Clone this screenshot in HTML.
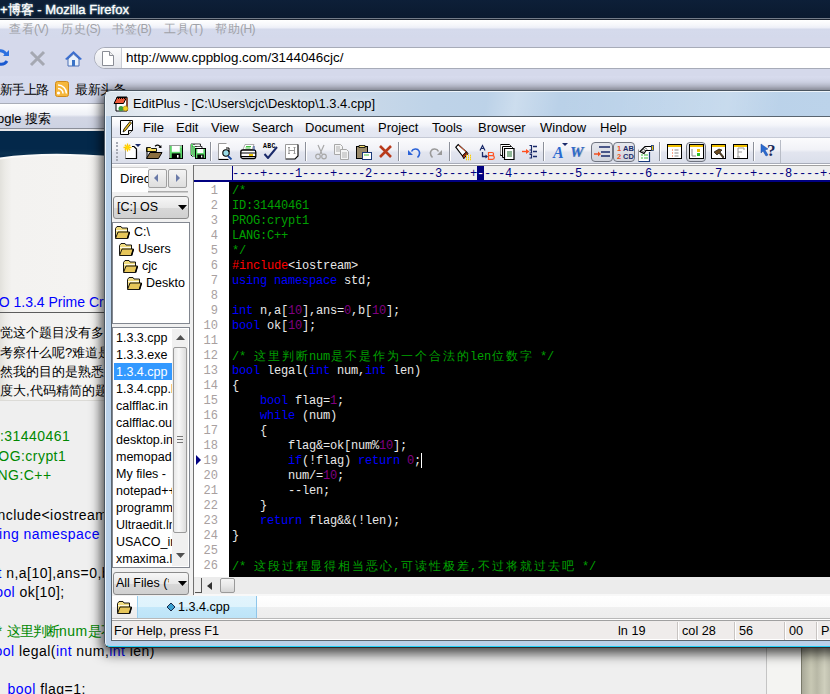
<!DOCTYPE html><html><head><meta charset="utf-8"><style>
*{margin:0;padding:0;box-sizing:border-box}
html,body{width:830px;height:694px;overflow:hidden;background:#efefef;font-family:"Liberation Sans",sans-serif;}
.a{position:absolute}
.t{position:absolute;white-space:pre;line-height:1}
.cj{display:inline-block;text-align:center}
.nocjk .cj,.nocjk .m b{color:transparent !important;background-image:linear-gradient(var(--c),var(--c)),linear-gradient(var(--c),var(--c)),linear-gradient(var(--c),var(--c)),linear-gradient(var(--c),var(--c)),linear-gradient(var(--c),var(--c)),linear-gradient(var(--c),var(--c));background-repeat:no-repeat;background-size:11px 1px,11px 1px,11px 1px,1px 11px,1px 11px,1px 11px;background-position:1px 1px,1px 6px,1px 11px,1px 1px,6px 1px,11px 1px;opacity:.78}
.nocjk .m b{background-position:2px 1px,2px 6px,2px 11px,2px 1px,7px 1px,12px 1px}
.m i{display:inline-block;width:7px;font-style:normal;text-align:center}
.m b{display:inline-block;width:14px;font-weight:normal;text-align:center;font-family:'Liberation Sans',sans-serif;font-size:12px}
</style></head><body>
<div class="a" style="left:0;top:0;width:830px;height:18px;background:linear-gradient(#0d1f38,#0a1a2f)"></div>
<div class="t" style="left:0;top:3px;font-size:13px;color:#fff;-webkit-text-stroke:0.35px #fff;text-shadow:0 0 3px #7ab">+<span class="cj" style="width:13px">博</span><span class="cj" style="width:13px">客</span> - Mozilla Firefox</div>
<div class="a" style="left:0;top:18px;width:830px;height:1px;background:#737c88"></div>
<div class="a" style="left:0;top:19px;width:830px;height:1px;background:#1c2430"></div>
<div class="a" style="left:0;top:20px;width:830px;height:18px;background:linear-gradient(#ffffff 0,#f6f7fb 5px,#eceef7 8px,#d5daec 9px,#d4d9eb)"></div>
<div class="t" style="left:8px;top:23px;font-size:12px;letter-spacing:-0.6px;color:#a0a2a8"><span class="cj" style="width:13px">查</span><span class="cj" style="width:13px">看</span>(V)</div>
<div class="t" style="left:60px;top:23px;font-size:12px;letter-spacing:-0.6px;color:#a0a2a8"><span class="cj" style="width:13px">历</span><span class="cj" style="width:13px">史</span>(S)</div>
<div class="t" style="left:111px;top:23px;font-size:12px;letter-spacing:-0.6px;color:#a0a2a8"><span class="cj" style="width:13px">书</span><span class="cj" style="width:13px">签</span>(B)</div>
<div class="t" style="left:163px;top:23px;font-size:12px;letter-spacing:-0.6px;color:#a0a2a8"><span class="cj" style="width:13px">工</span><span class="cj" style="width:13px">具</span>(T)</div>
<div class="t" style="left:214px;top:23px;font-size:12px;letter-spacing:-0.6px;color:#a0a2a8"><span class="cj" style="width:13px">帮</span><span class="cj" style="width:13px">助</span>(H)</div>
<div class="a" style="left:0;top:38px;width:830px;height:65px;background:#d5d9eb"></div>
<div class="a" style="left:94px;top:47px;width:760px;height:22px;border:1px solid #a7abb8;border-radius:11px 0 0 11px;background:#fff"></div>
<div class="a" style="left:95px;top:48px;width:27px;height:20px;border-radius:10px 0 0 10px;background:linear-gradient(#fbfbfc,#e4e6ec);border-right:1px solid #c9ccd5"></div>
<svg class="a" style="left:101px;top:50px" width="14" height="17"><path d="M1.5 1.5h7l4 4v10h-11z" fill="#fff" stroke="#8a8d95"/><path d="M8.5 1.5v4h4" fill="#eee" stroke="#8a8d95"/></svg>
<div class="t" style="left:126px;top:51px;font-size:13.4px;color:#000">http://www.cppblog.com/3144046cjc/</div>
<svg class="a" style="left:-9px;top:48px" width="19" height="19" viewBox="0 0 19 19"><path d="M15.5 7.5A7 7 0 0 0 3 6" fill="none" stroke="#2a6fe0" stroke-width="3"/><path d="M3.5 11.5A7 7 0 0 0 16 13" fill="none" stroke="#1a5ad0" stroke-width="3"/><path d="M12 8h6V2z" fill="#2a6fe0"/><path d="M7 11H1v6z" fill="#1a5ad0"/></svg>
<svg class="a" style="left:29px;top:50px" width="17" height="17"><path d="M2 2L15 15M15 2L2 15" stroke="#a5a8b2" stroke-width="3"/></svg>
<svg class="a" style="left:64px;top:50px" width="19" height="17"><path d="M9.5 1 L18 9 L16 10 L9.5 4 L3 10 L1 9z" fill="#3b6fd0"/><path d="M4 9 L9.5 4 L15 9 V16 H4z" fill="#eaf2fb" stroke="#4a6fb5"/><rect x="8" y="10" width="3" height="6" fill="#3b74c7"/></svg>
<div class="a" style="left:0;top:76px;width:830px;height:27px;background:linear-gradient(#d8dcee,#d3d8ea)"></div>
<div class="t" style="left:0;top:83px;font-size:13px;color:#000"><span class="cj" style="width:12px">新</span><span class="cj" style="width:12px">手</span><span class="cj" style="width:12px">上</span><span class="cj" style="width:12px">路</span></div>
<svg class="a" style="left:55px;top:81px" width="14" height="16"><rect x="0.5" y="0.5" width="13" height="15" rx="2" fill="#f6b73c" stroke="#d08a1a"/><circle cx="3.5" cy="12" r="1.6" fill="#fff"/><path d="M3 7.5a5 5 0 0 1 5 5M3 4a8.5 8.5 0 0 1 8.5 8.5" fill="none" stroke="#fff" stroke-width="1.6"/></svg>
<div class="t" style="left:75px;top:83px;font-size:13px;color:#000"><span class="cj" style="width:12.5px">最</span><span class="cj" style="width:12.5px">新</span><span class="cj" style="width:12.5px">头</span><span class="cj" style="width:12.5px">条</span></div>
<div class="a" style="left:0;top:103px;width:830px;height:1px;background:#a9adb8"></div>
<div class="a" style="left:0;top:104px;width:830px;height:24px;background:linear-gradient(#ffffff,#eef0f6 45%,#d2d6e4 55%,#cdd2e2)"></div>
<div class="t" style="left:-3px;top:112px;font-size:13px;color:#000">ogle <span class="cj" style="width:13px">搜</span><span class="cj" style="width:13px">索</span></div>
<div class="a" style="left:0;top:128px;width:830px;height:1px;background:#8a8e98"></div>
<div class="a" style="left:0;top:129px;width:830px;height:2px;background:#e8e8ea"></div>
<div class="a" style="left:0;top:131px;width:830px;height:30px;background:linear-gradient(#03284a 0,#03284a 60%,#0a3050 75%,#03284a 90%)"></div>
<svg class="a" style="left:0;top:151px" width="830" height="250"><defs><linearGradient id="pg" x1="0" x2="1" y1="0" y2="0"><stop offset="0" stop-color="#e2e1dc"/><stop offset="0.04" stop-color="#ecebe7"/><stop offset="0.09" stop-color="#f3f2f0"/><stop offset="1" stop-color="#f5f4f2"/></linearGradient></defs><path d="M0 7.5C25 4 50 3.5 70 4S100 5.5 130 7V251H0z" fill="url(#pg)"/><path d="M0 7.5C25 4 50 3.5 70 4S100 5.5 130 7" fill="none" stroke="#fbfbfa" stroke-width="2"/></svg>
<div class="t" style="left:-1.3px;top:295px;font-size:14px;color:#0000ff">O 1.3.4 Prime Cryptarithm</div>
<div class="a" style="left:0;top:312px;width:830px;height:1px;background:#5c5c5c"></div>
<div class="t" style="left:0;top:326px;font-size:13px;color:#000"><span class="cj" style="width:13px">觉</span><span class="cj" style="width:13px">这</span><span class="cj" style="width:13px">个</span><span class="cj" style="width:13px">题</span><span class="cj" style="width:13px">目</span><span class="cj" style="width:13px">没</span><span class="cj" style="width:13px">有</span><span class="cj" style="width:13px">多</span><span class="cj" style="width:13px">少</span><span class="cj" style="width:13px">难</span><span class="cj" style="width:13px">度</span></div>
<div class="t" style="left:0;top:346px;font-size:13px;color:#000"><span class="cj" style="width:13px">考</span><span class="cj" style="width:13px">察</span><span class="cj" style="width:13px">什</span><span class="cj" style="width:13px">么</span><span class="cj" style="width:13px">呢</span>?<span class="cj" style="width:13px">难</span><span class="cj" style="width:13px">道</span><span class="cj" style="width:13px">是</span></div>
<div class="t" style="left:0;top:365px;font-size:13px;color:#000"><span class="cj" style="width:13px">然</span><span class="cj" style="width:13px">我</span><span class="cj" style="width:13px">的</span><span class="cj" style="width:13px">目</span><span class="cj" style="width:13px">的</span><span class="cj" style="width:13px">是</span><span class="cj" style="width:13px">熟</span><span class="cj" style="width:13px">悉</span>C++</div>
<div class="t" style="left:0;top:384px;font-size:13px;color:#000"><span class="cj" style="width:13px">度</span><span class="cj" style="width:13px">大</span>,<span class="cj" style="width:13px">代</span><span class="cj" style="width:13px">码</span><span class="cj" style="width:13px">精</span><span class="cj" style="width:13px">简</span><span class="cj" style="width:13px">的</span><span class="cj" style="width:13px">题</span><span class="cj" style="width:13px">目</span></div>
<div class="a" style="left:0;top:400px;width:830px;height:1px;background:#dcdbd7"></div>
<div class="t" style="left:-15px;top:429px;font-size:14px;letter-spacing:0.45px;color:#000"><span style="color:#008800">ID:31440461</span></div>
<div class="t" style="left:-22px;top:449px;font-size:14px;letter-spacing:0.45px;color:#000"><span style="color:#008800">PROG:crypt1</span></div>
<div class="t" style="left:-20.5px;top:468px;font-size:14px;letter-spacing:0.45px;color:#000"><span style="color:#008800">LANG:C++</span></div>
<div class="t" style="left:-14.3px;top:508px;font-size:14px;letter-spacing:0.45px;color:#000">#include&lt;iostream&gt;</div>
<div class="t" style="left:-16.6px;top:527px;font-size:14px;letter-spacing:0.45px;color:#000"><span style="color:#0000ff">using namespace</span> std;</div>
<div class="t" style="left:-14.2px;top:566px;font-size:14px;letter-spacing:0.45px;color:#000"><span style="color:#0000ff">int</span> n,a[10],ans=0,b[10];</div>
<div class="t" style="left:-13.1px;top:585px;font-size:14px;letter-spacing:0.45px;color:#000"><span style="color:#0000ff">bool</span> ok[10];</div>
<div class="t" style="left:-7.6px;top:624px;font-size:14px;letter-spacing:0.45px;color:#000"><span style="color:#008800">/* <span class="cj" style="width:13px">这</span><span class="cj" style="width:13px">里</span><span class="cj" style="width:13px">判</span><span class="cj" style="width:13px">断</span>num<span class="cj" style="width:13px">是</span><span class="cj" style="width:13px">不</span><span class="cj" style="width:13px">是</span><span class="cj" style="width:13px">作</span><span class="cj" style="width:13px">为</span><span class="cj" style="width:13px">一</span><span class="cj" style="width:13px">个</span><span class="cj" style="width:13px">合</span><span class="cj" style="width:13px">法</span><span class="cj" style="width:13px">的</span>len<span class="cj" style="width:13px">位</span><span class="cj" style="width:13px">数</span><span class="cj" style="width:13px">字</span> */</span></div>
<div class="t" style="left:-13.7px;top:644px;font-size:14px;letter-spacing:0.45px;color:#000"><span style="color:#0000ff">bool</span> legal(<span style="color:#0000ff">int</span> num,<span style="color:#0000ff">int</span> len)</div>
<div class="t" style="left:-9.8px;top:682px;font-size:14px;letter-spacing:0.45px;color:#000">    <span style="color:#0000ff">bool</span> flag=1;</div>
<div class="a" style="left:766px;top:640px;width:1px;height:60px;background:#c4c4c4"></div>
<div class="a" style="left:767px;top:640px;width:34px;height:60px;background:#f4f4f2"></div>
<div class="a" style="left:801px;top:640px;width:1px;height:60px;background:#7a7a6a"></div>
<div class="a" style="left:802px;top:640px;width:30px;height:60px;background:linear-gradient(90deg,#a8a898,#c8c8b4 30%,#b8b8a6 50%,#cfcfbd 75%,#b8b8a8)"></div>
<div class="a" style="left:104px;top:90px;width:760px;height:558px;border-radius:7px 7px 6px 6px;box-shadow:0 3px 12px 3px rgba(0,0,0,0.7)"></div>
<div class="a" style="left:104px;top:90px;width:740px;height:558px;border:1px solid #4a5560;border-bottom-color:#302828;border-radius:7px 7px 6px 6px;background:#b9d1ea"></div>
<div class="a" style="left:105px;top:91px;width:740px;height:556px;border:1px solid rgba(255,255,255,0.75);border-bottom:1px solid #20d0f8;border-radius:6px 6px 5px 5px"></div>
<div class="a" style="left:106px;top:92px;width:730px;height:24px;background:linear-gradient(90deg,#dae3ec 0,#d4dee9 25%,#bed3e8 45%,#b8d0e8 70%,#bcd3ea)"></div>
<div class="a" style="left:106px;top:92px;width:730px;height:25px;background:linear-gradient(100deg,rgba(255,255,255,0) 0,rgba(255,255,255,0.35) 8%,rgba(255,255,255,0) 20%,rgba(255,255,255,0) 52%,rgba(255,255,255,0.25) 56%,rgba(255,255,255,0) 62%,rgba(255,255,255,0.2) 85%,rgba(255,255,255,0) 92%)"></div>
<svg class="a" style="left:113px;top:96px" width="16" height="16" viewBox="0 0 16 16">
<path d="M4 1h10v14H3V8z" fill="#fff" stroke="#000"/>
<path d="M4 1.5h9.5l-3 6H1z" fill="#ee5a3a" stroke="#000" stroke-width="1"/>
<path d="M5 2.5h1M7 2.5h1M9 2.5h1M11 2.5h1" stroke="#000"/>
<path d="M14 2v13" stroke="#8a3a20" stroke-width="1.5"/>
<circle cx="8" cy="12.5" r="2.5" fill="#3aa040"/><circle cx="12.5" cy="12.5" r="2.5" fill="#f0d020" stroke="#a08010" stroke-width=".6"/>
</svg>
<div class="t" style="left:133px;top:98px;font-size:12.85px;color:#000;text-shadow:0 0 6px rgba(255,255,255,0.9)">EditPlus - [C:\Users\cjc\Desktop\1.3.4.cpp]</div>
<div class="a" style="left:111px;top:116px;width:730px;height:525px;border:1px solid #5a6570;background:#f0f0f0"></div>
<div class="a" style="left:112px;top:117px;width:720px;height:20px;background:linear-gradient(#ffffff,#f4f5fa 40%,#e6e9f3 60%,#e3e6f1)"></div>
<svg class="a" style="left:119px;top:119px" width="16" height="17" viewBox="0 0 16 17"><path d="M1.5 1.5h12v10l-4 4h-8z" fill="#fff" stroke="#000"/><path d="M9.5 15.5v-4h4" fill="#ddd" stroke="#000"/><path d="M4 13L5 10 11 2.5 12.5 4 6.5 11.5z" fill="#f0c020" stroke="#000" stroke-width=".8"/></svg>
<div class="t" style="left:143px;top:121px;font-size:13px;color:#000">File</div>
<div class="t" style="left:176px;top:121px;font-size:13px;color:#000">Edit</div>
<div class="t" style="left:211px;top:121px;font-size:13px;color:#000">View</div>
<div class="t" style="left:252px;top:121px;font-size:13px;color:#000">Search</div>
<div class="t" style="left:305px;top:121px;font-size:13px;color:#000">Document</div>
<div class="t" style="left:378px;top:121px;font-size:13px;color:#000">Project</div>
<div class="t" style="left:432px;top:121px;font-size:13px;color:#000">Tools</div>
<div class="t" style="left:478px;top:121px;font-size:13px;color:#000">Browser</div>
<div class="t" style="left:540px;top:121px;font-size:13px;color:#000">Window</div>
<div class="t" style="left:600px;top:121px;font-size:13px;color:#000">Help</div>
<div class="a" style="left:112px;top:137px;width:720px;height:1px;background:#c5c9d5"></div>
<div class="a" style="left:112px;top:138px;width:720px;height:26px;background:linear-gradient(#fbfbfd,#f1f2f7 45%,#e2e5ef 55%,#dadeea)"></div>
<div class="a" style="left:112px;top:163px;width:720px;height:1px;background:#a8acb8"></div>
<div class="a" style="left:112px;top:164px;width:720px;height:1px;background:#ffffff"></div>
<div class="a" style="left:116px;top:142.0px;width:2px;height:2px;background:#a7abb5"></div>
<div class="a" style="left:116px;top:145.4px;width:2px;height:2px;background:#a7abb5"></div>
<div class="a" style="left:116px;top:148.8px;width:2px;height:2px;background:#a7abb5"></div>
<div class="a" style="left:116px;top:152.2px;width:2px;height:2px;background:#a7abb5"></div>
<div class="a" style="left:116px;top:155.6px;width:2px;height:2px;background:#a7abb5"></div>
<div class="a" style="left:116px;top:159.0px;width:2px;height:2px;background:#a7abb5"></div>
<svg class="a" style="left:123px;top:143px" width="18" height="17" viewBox="0 0 18 17"><path d="M2.5 3.5h8.5l1.5 1.5v10.5h-10z" fill="#fff"/><path d="M2.5 4v11.5" stroke="#a0a0a0"/><path d="M9 3.5h2l2.5 2.5V15.5H2.5" fill="none" stroke="#000" stroke-width="1.2"/><path d="M4.5 0.5v8M0.5 4.5h8M1.8 1.8l5.4 5.4M7.2 1.8l-5.4 5.4" stroke="#ffc800" stroke-width="1.3"/><circle cx="4.5" cy="4.5" r="1.8" fill="#ffd800"/><path d="M12 1h6l-3 3z" fill="#1a2a6a"/></svg>
<svg class="a" style="left:146px;top:144px" width="17" height="15" viewBox="0 0 17 15"><path d="M.5 3.5h4l1 1h5v3H.5z" fill="#f8e060" stroke="#000" stroke-width=".9"/><path d="M1 4v10" stroke="#000"/><path d="M.5 14.5L4 8.5h12l-3.5 6z" fill="#8a6e40" stroke="#000" stroke-width="1"/><path d="M9 2.2c2-1.5 4-1.5 5.5 1" fill="none" stroke="#000" stroke-width="1.3"/><path d="M12.5 3.8l3 .2-.2-3z" fill="#000"/></svg>
<svg class="a" style="left:169px;top:145px" width="14" height="14" viewBox="0 0 14 14"><rect x="0" y="0" width="14" height="14" fill="#000"/><rect x="0" y="0" width="13" height="1" fill="#999"/><rect x="0" y="0" width="1" height="13" fill="#999"/><rect x="1" y="1" width="12" height="12" fill="#5cd46a"/><rect x="2.8" y="1" width="8" height="5.8" fill="#fff"/><rect x="2.8" y="8.4" width="8.6" height="5" fill="#000"/><rect x="8" y="10" width="1.6" height="2.6" fill="#fff"/><rect x="11.5" y="1.5" width="1" height="1" fill="#fff"/></svg>
<svg class="a" style="left:190px;top:143px" width="17" height="16" viewBox="0 0 17 16"><path d="M.5 11.5V1.5h8" fill="none" stroke="#999"/><path d="M1 1h9.5v2" fill="none" stroke="#000" stroke-width=".8"/><rect x="1" y="1" width="2" height="11" fill="#5cd46a"/><path d="M.8 11.8l2 2" stroke="#000"/><path d="M2.5 3.5h9.5v2" fill="none" stroke="#000" stroke-width=".8"/><rect x="3" y="3" width="2" height="11" fill="#5cd46a"/><path d="M3 3v11" stroke="#999" stroke-width=".6"/><rect x="5" y="5" width="11" height="11" fill="#000"/><rect x="6" y="6" width="9" height="9" fill="#5cd46a"/><rect x="7.3" y="6" width="6" height="4" fill="#fff"/><rect x="7.3" y="11.5" width="6.5" height="4.5" fill="#000"/><rect x="11" y="12.5" width="1.3" height="2" fill="#fff"/><rect x="5" y="1.5" width="4" height="1.5" fill="#fff"/><rect x="7" y="3.8" width="4" height="1.2" fill="#fff"/></svg>
<div class="a" style="left:210px;top:142px;width:1px;height:19px;background:#8c909a"></div>
<div class="a" style="left:211px;top:142px;width:1px;height:19px;background:#fff"></div>
<svg class="a" style="left:218px;top:143px" width="15" height="17" viewBox="0 0 15 17"><path d="M.5 .5h8l3 3v13H.5z" fill="#fff"/><path d="M.5 16.5V.5h8" fill="none" stroke="#999"/><path d="M.5 16.5h10" stroke="#000" stroke-width="1.2"/><circle cx="8" cy="10" r="3.2" fill="#9adce8" stroke="#000" stroke-width="1.1"/><path d="M10 13l3.5 3.5" stroke="#1a4aa0" stroke-width="1.8"/><path d="M8 5h3v4" fill="none" stroke="#000"/></svg>
<svg class="a" style="left:240px;top:144px" width="17" height="16" viewBox="0 0 17 16"><path d="M5 .5h9l-2 5H3z" fill="#fff" stroke="#999" stroke-width=".8"/><path d="M6 2.5h5M5.5 4h5" stroke="#40c040" stroke-width="1"/><rect x="0.8" y="6" width="15" height="8.5" rx="2" fill="#fff" stroke="#000" stroke-width="1.3"/><path d="M1 9h15M1 12.5h15" stroke="#000" stroke-width="1.2"/><rect x="9" y="10" width="4" height="2" fill="#f0c800"/><path d="M14 2v5" stroke="#1a3a8a" stroke-width="1"/></svg>
<div class="t" style="left:263px;top:144px;font-size:6.5px;font-weight:bold;letter-spacing:.3px;color:#000;font-family:'Liberation Mono'">ABC</div>
<svg class="a" style="left:263px;top:146px" width="15" height="13" viewBox="0 0 15 13"><path d="M1.5 8l3.5 4L14 1" fill="none" stroke="#1a2a6a" stroke-width="2"/></svg>
<svg class="a" style="left:285px;top:144px" width="14" height="16" viewBox="0 0 14 16"><path d="M.5 .5h12.5v11.5l-3 3H.5z" fill="#fff"/><path d="M.5 14.5V.5h12.5" fill="none" stroke="#999"/><path d="M13 .5v11.5l-3 3H.5" fill="none" stroke="#000" stroke-width="1.1"/><path d="M4 3.5v6M9.5 3.5v6M4 6.5h5.5M3 3.5h2M8.5 3.5h2M3 9.5h2M8.5 9.5h2" stroke="#999" stroke-width="1"/></svg>
<div class="a" style="left:305px;top:142px;width:1px;height:19px;background:#8c909a"></div>
<div class="a" style="left:306px;top:142px;width:1px;height:19px;background:#fff"></div>
<svg class="a" style="left:314px;top:144px" width="14" height="16" viewBox="0 0 14 16"><path d="M4 1l4 9M10 1l-4 9" stroke="#a8a8a8" stroke-width="1.2"/><circle cx="4" cy="12.5" r="2.3" fill="none" stroke="#a8a8a8" stroke-width="1.2"/><circle cx="10" cy="12.5" r="2.3" fill="none" stroke="#a8a8a8" stroke-width="1.2"/></svg>
<svg class="a" style="left:334px;top:144px" width="16" height="16" viewBox="0 0 16 16"><path d="M.5 .5h6l2 2v8H.5z" fill="#f4f4f4" stroke="#a8a8a8"/><path d="M6.5 5.5h6l2 2v8h-8z" fill="#f4f4f4" stroke="#a8a8a8"/><path d="M2 3h4M2 5h4M2 7h4M8 9h5M8 11h5M8 13h5" stroke="#b0b0b0"/></svg>
<svg class="a" style="left:356px;top:144px" width="16" height="16" viewBox="0 0 16 16"><rect x="0.5" y="2.5" width="11" height="12" fill="#9a8a6a" stroke="#000"/><path d="M3 1.5h6v2H3z" fill="#f6e070" stroke="#000" stroke-width=".8"/><rect x="6.5" y="8.5" width="9" height="7" fill="#fff" stroke="#1a3a7a"/><path d="M8 11h5" stroke="#40c040"/></svg>
<svg class="a" style="left:378px;top:144px" width="15" height="15" viewBox="0 0 15 15"><path d="M2 2L13 13M13 2L2 13" stroke="#b83a1a" stroke-width="2.6"/></svg>
<div class="a" style="left:398px;top:142px;width:1px;height:19px;background:#8c909a"></div>
<div class="a" style="left:399px;top:142px;width:1px;height:19px;background:#fff"></div>
<svg class="a" style="left:407px;top:147px" width="14" height="12" viewBox="0 0 14 12"><path d="M4.5 4.5C6 1.5 10.5 1 12 4s-.5 5.5-1.5 6.5" fill="none" stroke="#2a62d8" stroke-width="1.6"/><path d="M1 3v5h5z" fill="#2a62d8"/></svg>
<svg class="a" style="left:429px;top:147px" width="14" height="12" viewBox="0 0 14 12"><path d="M9.5 4.5C8 1.5 3.5 1 2 4s.5 5.5 1.5 6.5" fill="none" stroke="#9a9a9a" stroke-width="1.6"/><path d="M13 3v5H8z" fill="#9a9a9a"/></svg>
<div class="a" style="left:449px;top:142px;width:1px;height:19px;background:#8c909a"></div>
<div class="a" style="left:450px;top:142px;width:1px;height:19px;background:#fff"></div>
<svg class="a" style="left:455px;top:143px" width="17" height="18" viewBox="0 0 17 18"><path d="M.8 4.2L3.2 1.6 11.5 9 7.5 13z" fill="#fff" stroke="#000" stroke-width="1.1"/><path d="M4 2.5l7 6.2" stroke="#f06030" stroke-width=".9"/><path d="M7.5 13l4-4 1.6 1.4-4.3 5.3z" fill="#f06030" stroke="#000" stroke-width="1"/><path d="M8.2 13.8l3.8-3.6" stroke="#8a2a10" stroke-width="1.3"/><path d="M11 12.5h1M13 12.5h1M15 12.5h1M11 14.5h1M13 14.5h1M15 14.5h1M11 16.5h1M13 16.5h1M15 16.5h1" stroke="#ffd000" stroke-width="1.3"/></svg>
<svg class="a" style="left:478px;top:144px" width="17" height="17" viewBox="0 0 17 17"><path d="M4.5 1.5v0M2.5 4.5h4M2 6.5l2.5-5 2.5 5" fill="none" stroke="#1a2a6a" stroke-width="1.2"/><path d="M4.5 8v4.5h4" fill="none" stroke="#1a2a6a" stroke-width="1.3"/><path d="M7.5 10.5l2.5 2-2.5 2z" fill="#1a2a6a"/><path d="M10.5 8.5h3.5a1.6 1.6 0 0 1 0 3.2h-3.5zM10.5 11.7h4a1.8 1.8 0 0 1 0 3.6h-4z" fill="none" stroke="#ff5020" stroke-width="1.2"/></svg>
<svg class="a" style="left:500px;top:144px" width="15" height="16" viewBox="0 0 15 16"><path d="M.5 .5h9l1 1v10H.5z" fill="#fff" stroke="#000"/><path d="M.5 .5v10" stroke="#888"/><path d="M2.5 2.5h9l1 1v10h-10z" fill="#fff" stroke="#000"/><path d="M4.5 4.5h9.5v11H4.5z" fill="#fff" stroke="#000" stroke-width="1.2"/><path d="M7 8h5M7 10h5M7 12h5" stroke="#207030" stroke-width="1.1"/></svg>
<svg class="a" style="left:522px;top:144px" width="16" height="15" viewBox="0 0 16 15"><path d="M0 7.5h4.5" stroke="#ff5020" stroke-width="1.4"/><path d="M4 5l3.5 2.5L4 10z" fill="#ff5020"/><path d="M7.5 1.5h2v4M7.5 6h2v3h-2M7.5 10.5h2v3.5h-2" fill="none" stroke="#1a2a6a" stroke-width="1.2"/><path d="M11 2.5h4M11 7.5h4M11 12.5h4" stroke="#1a2a6a" stroke-width="1.3"/></svg>
<div class="a" style="left:543px;top:142px;width:1px;height:19px;background:#8c909a"></div>
<div class="a" style="left:544px;top:142px;width:1px;height:19px;background:#fff"></div>
<div class="t" style="left:553px;top:145px;font-size:16px;font-weight:bold;font-style:italic;color:#2a6ad0;font-family:'Liberation Serif'">A</div>
<svg class="a" style="left:562px;top:143px" width="6" height="4" viewBox="0 0 6 4"><path d="M0 0h6l-3 3z" fill="#1a2a6a"/></svg>
<div class="t" style="left:571px;top:145px;font-size:15px;font-weight:bold;font-style:italic;color:#b0b0b0;font-family:'Liberation Serif'">W</div>
<div class="t" style="left:570px;top:145px;font-size:15px;font-weight:bold;font-style:italic;color:#2a6ad0;font-family:'Liberation Serif'">W</div>
<div class="a" style="left:591px;top:142px;width:22px;height:20px;border:1px solid #707480;border-radius:4px;background:linear-gradient(#e6e8ee,#d0d3dc)"></div>
<svg class="a" style="left:594px;top:145px" width="16" height="14" viewBox="0 0 16 14"><path d="M5 2h11M7 7h9M7 11h9" stroke="#1a2a6a" stroke-width="1.5"/><path d="M0 9h5" stroke="#f05020" stroke-width="1.5"/><path d="M4 6.5l3 2.5-3 2.5z" fill="#f05020"/></svg>
<div class="a" style="left:613px;top:142px;width:22px;height:20px;border:1px solid #707480;border-radius:4px;background:linear-gradient(#e6e8ee,#d0d3dc)"></div>
<div class="t" style="left:617px;top:145px;font-size:7.5px;font-weight:bold;color:#f05020;line-height:8px">1<br>2</div>
<div class="t" style="left:623px;top:145px;font-size:7.5px;font-weight:bold;color:#1a2a6a;line-height:8px">AB<br>CD</div>
<svg class="a" style="left:637px;top:144px" width="17" height="19" viewBox="0 0 17 19"><path d="M1.5 5.5h11v12h-11z" fill="#fff"/><path d="M1.5 17.5V5.5" stroke="#999"/><path d="M1.5 17.5h11V8" fill="none" stroke="#1a3a7a" stroke-width="1.2"/><path d="M4 11h2M7 11h4M4 14h2M7 14h4" stroke="#40c040" stroke-width="1.2"/><path d="M3 7.5L8 2.5h6l2 1.5-2 2.5H9L7 9.5z" fill="#fff" stroke="#000" stroke-width="1.1"/><path d="M5 6.5l2 2M6.5 5l2 2M8 3.5l2 2" stroke="#000" stroke-width=".8"/><rect x="14.5" y="1.5" width="2" height="5" fill="#f0c000" stroke="#1a3a7a" stroke-width=".8"/></svg>
<div class="a" style="left:659px;top:142px;width:1px;height:19px;background:#8c909a"></div>
<div class="a" style="left:660px;top:142px;width:1px;height:19px;background:#fff"></div>
<svg class="a" style="left:667px;top:144px" width="15" height="15" viewBox="0 0 15 15"><rect x=".5" y=".5" width="14" height="14" fill="#fff" stroke="#000"/><rect x="1" y="1" width="13" height="2" fill="#f0c000"/><path d="M5 6h1M5 9h1M5 12h1" stroke="#f05020"/><path d="M7.5 6h4M7.5 9h4M7.5 12h4" stroke="#888"/></svg>
<div class="a" style="left:686px;top:142px;width:20px;height:20px;border:1px solid #707480;border-radius:4px;background:linear-gradient(#e6e8ee,#d0d3dc)"></div>
<svg class="a" style="left:689px;top:144px" width="15" height="15" viewBox="0 0 15 15"><rect x=".5" y=".5" width="14" height="14" fill="#fff" stroke="#000"/><rect x="1" y="1" width="13" height="2" fill="#f0c000"/><path d="M3 5v7h4" fill="none" stroke="#888"/><rect x="8" y="5" width="3" height="3" fill="#f0c000"/><rect x="8" y="9" width="3" height="3" fill="#30c030"/></svg>
<svg class="a" style="left:711px;top:144px" width="15" height="15" viewBox="0 0 15 15"><rect x=".5" y=".5" width="14" height="14" fill="#fff" stroke="#000"/><rect x="1" y="1" width="13" height="2" fill="#f0c000"/><path d="M3 8l5-3 3 1-2 2 4 5-1 1-4-5-2 2z" fill="#6a4a20" stroke="#000" stroke-width=".6"/></svg>
<svg class="a" style="left:733px;top:144px" width="15" height="15" viewBox="0 0 15 15"><rect x=".5" y=".5" width="14" height="14" fill="#fff" stroke="#000"/><rect x="1" y="1" width="13" height="2" fill="#f0c000"/><path d="M5 4h6v2M5 4v9M4 13h3M5 8h4" fill="none" stroke="#999" stroke-width="1"/></svg>
<div class="a" style="left:753px;top:142px;width:1px;height:19px;background:#8c909a"></div>
<div class="a" style="left:754px;top:142px;width:1px;height:19px;background:#fff"></div>
<svg class="a" style="left:760px;top:143px" width="9" height="16" viewBox="0 0 9 16"><path d="M1 1l7 5-3 1 3 5-2 1-3-5-2 2z" fill="#2a6ad0" stroke="#1a4aa0" stroke-width=".5"/></svg>
<div class="t" style="left:767px;top:142px;font-size:17px;font-weight:bold;color:#1a2a5a;font-family:'Liberation Serif'">?</div>
<div class="a" style="left:780px;top:140px;width:1px;height:23px;background:#b8bcc6"></div>
<div class="a" style="left:112px;top:167px;width:36px;height:25px;background:#fff;border-top:1px solid #d0d0d0"></div>
<div class="t" style="left:120px;top:172px;font-size:13px;color:#000">Direc</div>
<div class="a" style="left:148px;top:169px;width:19px;height:19px;border:1px solid #a0a0a0;border-radius:2px;background:linear-gradient(#f4f4f4,#dedede)"></div>
<div class="a" style="left:168px;top:169px;width:19px;height:19px;border:1px solid #a0a0a0;border-radius:2px;background:linear-gradient(#f4f4f4,#dedede)"></div>
<svg class="a" style="left:153px;top:174px" width="8" height="8" viewBox="0 0 8 8"><path d="M5 0v8L1 4z" fill="#6a7aa8"/></svg>
<svg class="a" style="left:174px;top:174px" width="8" height="8" viewBox="0 0 8 8"><path d="M2 0v8l4-4z" fill="#6a7aa8"/></svg>
<div class="a" style="left:148px;top:191px;width:40px;height:2px;background:linear-gradient(#9a9a9a,#ddd)"></div>
<div class="a" style="left:113px;top:196px;width:76px;height:23px;border:1px solid #8a8a8a;border-radius:3px;background:linear-gradient(#f6f6f6,#e8e8e8 50%,#d8d8d8 51%,#d0d0d0)"></div>
<div class="t" style="left:117px;top:201px;font-size:12.5px;color:#000">[C:] OS</div>
<svg class="a" style="left:178px;top:205px" width="9" height="5" viewBox="0 0 9 5"><path d="M0 0h9l-4.5 5z" fill="#000"/></svg>
<div class="a" style="left:112px;top:222px;width:78px;height:102px;border:1px solid #828790;background:#fff"></div>
<svg class="a" style="left:115px;top:226px" width="15" height="13" viewBox="0 0 15 13"><path d="M.5 2.5l1.5-2h4l1 1.5h5.5v9.5H.5z" fill="#f0dc80" stroke="#000" stroke-width=".9"/><path d="M1 4.5h11" stroke="#fff" stroke-width=".8"/><path d="M.5 12.5l2.5-6.5h11.5l-2 6.5z" fill="#e6c65a" stroke="#000" stroke-width=".9"/><path d="M12.5 12.5l2-6.5" stroke="#000" stroke-width="1.6"/></svg>
<div class="t" style="left:134px;top:226px;font-size:12.5px;color:#000">C:\</div>
<svg class="a" style="left:119px;top:243px" width="15" height="13" viewBox="0 0 15 13"><path d="M.5 2.5l1.5-2h4l1 1.5h5.5v9.5H.5z" fill="#f0dc80" stroke="#000" stroke-width=".9"/><path d="M1 4.5h11" stroke="#fff" stroke-width=".8"/><path d="M.5 12.5l2.5-6.5h11.5l-2 6.5z" fill="#e6c65a" stroke="#000" stroke-width=".9"/><path d="M12.5 12.5l2-6.5" stroke="#000" stroke-width="1.6"/></svg>
<div class="t" style="left:138px;top:243px;font-size:12.5px;color:#000">Users</div>
<svg class="a" style="left:123px;top:260px" width="15" height="13" viewBox="0 0 15 13"><path d="M.5 2.5l1.5-2h4l1 1.5h5.5v9.5H.5z" fill="#f0dc80" stroke="#000" stroke-width=".9"/><path d="M1 4.5h11" stroke="#fff" stroke-width=".8"/><path d="M.5 12.5l2.5-6.5h11.5l-2 6.5z" fill="#e6c65a" stroke="#000" stroke-width=".9"/><path d="M12.5 12.5l2-6.5" stroke="#000" stroke-width="1.6"/></svg>
<div class="t" style="left:142px;top:260px;font-size:12.5px;color:#000">cjc</div>
<svg class="a" style="left:127px;top:277px" width="15" height="13" viewBox="0 0 15 13"><path d="M.5 2.5l1.5-2h4l1 1.5h5.5v9.5H.5z" fill="#f0dc80" stroke="#000" stroke-width=".9"/><path d="M1 4.5h11" stroke="#fff" stroke-width=".8"/><path d="M.5 12.5l2.5-6.5h11.5l-2 6.5z" fill="#e6c65a" stroke="#000" stroke-width=".9"/><path d="M12.5 12.5l2-6.5" stroke="#000" stroke-width="1.6"/></svg>
<div class="t" style="left:146px;top:277px;font-size:12.5px;color:#000">Deskto</div>
<div class="a" style="left:112px;top:327px;width:78px;height:241px;border:1px solid #828790;background:#fff;overflow:hidden"></div>
<div class="a" style="left:113px;top:328px;width:59px;height:239px;overflow:hidden">
<div class="t" style="left:3px;top:4px;font-size:12.5px;color:#000">1.3.3.cpp</div>
<div class="t" style="left:3px;top:21px;font-size:12.5px;color:#000">1.3.3.exe</div>
<div class="a" style="left:1px;top:35px;width:58px;height:17px;background:#3399ff"></div>
<div class="t" style="left:3px;top:38px;font-size:12.5px;color:#fff">1.3.4.cpp</div>
<div class="t" style="left:3px;top:55px;font-size:12.5px;color:#000">1.3.4.cpp.bak</div>
<div class="t" style="left:3px;top:72px;font-size:12.5px;color:#000">calfflac.in</div>
<div class="t" style="left:3px;top:89px;font-size:12.5px;color:#000">calfflac.out</div>
<div class="t" style="left:3px;top:106px;font-size:12.5px;color:#000">desktop.ini</div>
<div class="t" style="left:3px;top:123px;font-size:12.5px;color:#000">memopad</div>
<div class="t" style="left:3px;top:140px;font-size:12.5px;color:#000">My files - </div>
<div class="t" style="left:3px;top:157px;font-size:12.5px;color:#000">notepad++</div>
<div class="t" style="left:3px;top:174px;font-size:12.5px;color:#000">programming</div>
<div class="t" style="left:3px;top:191px;font-size:12.5px;color:#000">Ultraedit.lnk</div>
<div class="t" style="left:3px;top:208px;font-size:12.5px;color:#000">USACO_in</div>
<div class="t" style="left:3px;top:225px;font-size:12.5px;color:#000">xmaxima.lnk</div>
</div>
<div class="a" style="left:172px;top:329px;width:16px;height:237px;background:#f0f0f0"></div>
<svg class="a" style="left:176px;top:335px" width="9" height="5" viewBox="0 0 9 5"><path d="M0 5h9L4.5 0z" fill="#505050"/></svg>
<svg class="a" style="left:176px;top:553px" width="9" height="5" viewBox="0 0 9 5"><path d="M0 0h9L4.5 5z" fill="#505050"/></svg>
<div class="a" style="left:173px;top:347px;width:14px;height:186px;border:1px solid #9a9a9a;border-radius:2px;background:linear-gradient(90deg,#e8e8e8,#f8f8f8 40%,#dcdcdc)"></div>
<div class="a" style="left:177px;top:436px;width:6px;height:7px;border-top:1px solid #777;border-bottom:1px solid #777"></div>
<div class="a" style="left:177px;top:439px;width:6px;height:1px;background:#777"></div>
<div class="a" style="left:113px;top:572px;width:76px;height:23px;border:1px solid #8a8a8a;border-radius:3px;background:linear-gradient(#f6f6f6,#e8e8e8 50%,#d8d8d8 51%,#d0d0d0)"></div>
<div class="a" style="left:116px;top:572px;width:53px;height:22px;overflow:hidden"><div class="t" style="left:0;top:5px;font-size:12.5px;color:#000">All Files (*.*)</div></div>
<svg class="a" style="left:178px;top:581px" width="9" height="5" viewBox="0 0 9 5"><path d="M0 0h9l-4.5 5z" fill="#000"/></svg>
<div class="a" style="left:193px;top:165px;width:1px;height:430px;background:#707070"></div>
<div class="a" style="left:194px;top:165px;width:640px;height:1px;background:#a0a0a0"></div>
<div class="a" style="left:194px;top:166px;width:640px;height:14px;background:#efefef"></div>
<div class="a" style="left:194px;top:180px;width:640px;height:2px;background:#000080"></div>
<div class="a" style="left:232px;top:166px;width:1px;height:14px;background:#000080"></div>
<div class="t m" style="left:232px;top:168px;font-family:'Liberation Mono',monospace;font-size:12px;color:#000080"><i>-</i><i>-</i><i>-</i><i>-</i><i>+</i><i>-</i><i>-</i><i>-</i><i>-</i><i>1</i><i>-</i><i>-</i><i>-</i><i>-</i><i>+</i><i>-</i><i>-</i><i>-</i><i>-</i><i>2</i><i>-</i><i>-</i><i>-</i><i>-</i><i>+</i><i>-</i><i>-</i><i>-</i><i>-</i><i>3</i><i>-</i><i>-</i><i>-</i><i>-</i><i>+</i><i>-</i><i>-</i><i>-</i><i>-</i><i>4</i><i>-</i><i>-</i><i>-</i><i>-</i><i>+</i><i>-</i><i>-</i><i>-</i><i>-</i><i>5</i><i>-</i><i>-</i><i>-</i><i>-</i><i>+</i><i>-</i><i>-</i><i>-</i><i>-</i><i>6</i><i>-</i><i>-</i><i>-</i><i>-</i><i>+</i><i>-</i><i>-</i><i>-</i><i>-</i><i>7</i><i>-</i><i>-</i><i>-</i><i>-</i><i>+</i><i>-</i><i>-</i><i>-</i><i>-</i><i>8</i><i>-</i><i>-</i><i>-</i><i>-</i><i>+</i><i>-</i><i>-</i><i>-</i><i>-</i><i>9</i></div>
<div class="a" style="left:477px;top:166px;width:7px;height:14px;background:#000080"></div>
<div class="t" style="left:477px;top:168px;font-family:'Liberation Mono',monospace;font-size:12px;color:#fff">-</div>
<div class="a" style="left:194px;top:182px;width:35px;height:395px;background:#fff"></div>
<div class="a" style="left:229px;top:182px;width:605px;height:395px;background:#000"></div>
<div class="a" style="left:194px;top:182px;width:636px;height:395px;overflow:hidden">
<div class="t" style="left:0;top:3px;width:24px;text-align:right;font-family:'Liberation Mono',monospace;font-size:12px;color:#a8a0a0">1</div>
<div class="t m" style="left:38px;top:3px;font-family:'Liberation Mono',monospace;font-size:12px;"><span style="color:#00a000"><i>/</i><i>*</i></span></div>
<div class="t" style="left:0;top:18px;width:24px;text-align:right;font-family:'Liberation Mono',monospace;font-size:12px;color:#a8a0a0">2</div>
<div class="t m" style="left:38px;top:18px;font-family:'Liberation Mono',monospace;font-size:12px;"><span style="color:#00a000"><i>I</i><i>D</i><i>:</i><i>3</i><i>1</i><i>4</i><i>4</i><i>0</i><i>4</i><i>6</i><i>1</i></span></div>
<div class="t" style="left:0;top:33px;width:24px;text-align:right;font-family:'Liberation Mono',monospace;font-size:12px;color:#a8a0a0">3</div>
<div class="t m" style="left:38px;top:33px;font-family:'Liberation Mono',monospace;font-size:12px;"><span style="color:#00a000"><i>P</i><i>R</i><i>O</i><i>G</i><i>:</i><i>c</i><i>r</i><i>y</i><i>p</i><i>t</i><i>1</i></span></div>
<div class="t" style="left:0;top:48px;width:24px;text-align:right;font-family:'Liberation Mono',monospace;font-size:12px;color:#a8a0a0">4</div>
<div class="t m" style="left:38px;top:48px;font-family:'Liberation Mono',monospace;font-size:12px;"><span style="color:#00a000"><i>L</i><i>A</i><i>N</i><i>G</i><i>:</i><i>C</i><i>+</i><i>+</i></span></div>
<div class="t" style="left:0;top:63px;width:24px;text-align:right;font-family:'Liberation Mono',monospace;font-size:12px;color:#a8a0a0">5</div>
<div class="t m" style="left:38px;top:63px;font-family:'Liberation Mono',monospace;font-size:12px;"><span style="color:#00a000"><i>*</i><i>/</i></span></div>
<div class="t" style="left:0;top:78px;width:24px;text-align:right;font-family:'Liberation Mono',monospace;font-size:12px;color:#a8a0a0">6</div>
<div class="t m" style="left:38px;top:78px;font-family:'Liberation Mono',monospace;font-size:12px;"><span style="color:#ff0000"><i>#</i><i>i</i><i>n</i><i>c</i><i>l</i><i>u</i><i>d</i><i>e</i></span><span style="color:#e8e8e8"><i>&lt;</i><i>i</i><i>o</i><i>s</i><i>t</i><i>r</i><i>e</i><i>a</i><i>m</i><i>&gt;</i></span></div>
<div class="t" style="left:0;top:93px;width:24px;text-align:right;font-family:'Liberation Mono',monospace;font-size:12px;color:#a8a0a0">7</div>
<div class="t m" style="left:38px;top:93px;font-family:'Liberation Mono',monospace;font-size:12px;"><span style="color:#0000ff"><i>u</i><i>s</i><i>i</i><i>n</i><i>g</i></span><span style="color:#e8e8e8"><i> </i></span><span style="color:#0000ff"><i>n</i><i>a</i><i>m</i><i>e</i><i>s</i><i>p</i><i>a</i><i>c</i><i>e</i></span><span style="color:#e8e8e8"><i> </i><i>s</i><i>t</i><i>d</i><i>;</i></span></div>
<div class="t" style="left:0;top:108px;width:24px;text-align:right;font-family:'Liberation Mono',monospace;font-size:12px;color:#a8a0a0">8</div>
<div class="t m" style="left:38px;top:108px;font-family:'Liberation Mono',monospace;font-size:12px;"></div>
<div class="t" style="left:0;top:123px;width:24px;text-align:right;font-family:'Liberation Mono',monospace;font-size:12px;color:#a8a0a0">9</div>
<div class="t m" style="left:38px;top:123px;font-family:'Liberation Mono',monospace;font-size:12px;"><span style="color:#0000ff"><i>i</i><i>n</i><i>t</i></span><span style="color:#e8e8e8"><i> </i><i>n</i><i>,</i><i>a</i><i>[</i></span><span style="color:#800080"><i>1</i><i>0</i></span><span style="color:#e8e8e8"><i>]</i><i>,</i><i>a</i><i>n</i><i>s</i><i>=</i></span><span style="color:#800080"><i>0</i></span><span style="color:#e8e8e8"><i>,</i><i>b</i><i>[</i></span><span style="color:#800080"><i>1</i><i>0</i></span><span style="color:#e8e8e8"><i>]</i><i>;</i></span></div>
<div class="t" style="left:0;top:138px;width:24px;text-align:right;font-family:'Liberation Mono',monospace;font-size:12px;color:#a8a0a0">10</div>
<div class="t m" style="left:38px;top:138px;font-family:'Liberation Mono',monospace;font-size:12px;"><span style="color:#0000ff"><i>b</i><i>o</i><i>o</i><i>l</i></span><span style="color:#e8e8e8"><i> </i><i>o</i><i>k</i><i>[</i></span><span style="color:#800080"><i>1</i><i>0</i></span><span style="color:#e8e8e8"><i>]</i><i>;</i></span></div>
<div class="t" style="left:0;top:153px;width:24px;text-align:right;font-family:'Liberation Mono',monospace;font-size:12px;color:#a8a0a0">11</div>
<div class="t m" style="left:38px;top:153px;font-family:'Liberation Mono',monospace;font-size:12px;"></div>
<div class="t" style="left:0;top:168px;width:24px;text-align:right;font-family:'Liberation Mono',monospace;font-size:12px;color:#a8a0a0">12</div>
<div class="t m" style="left:38px;top:168px;font-family:'Liberation Mono',monospace;font-size:12px;"><span style="color:#00a000"><i>/</i><i>*</i><i> </i><b>这</b><b>里</b><b>判</b><b>断</b><i>n</i><i>u</i><i>m</i><b>是</b><b>不</b><b>是</b><b>作</b><b>为</b><b>一</b><b>个</b><b>合</b><b>法</b><b>的</b><i>l</i><i>e</i><i>n</i><b>位</b><b>数</b><b>字</b><i> </i><i>*</i><i>/</i></span></div>
<div class="t" style="left:0;top:183px;width:24px;text-align:right;font-family:'Liberation Mono',monospace;font-size:12px;color:#a8a0a0">13</div>
<div class="t m" style="left:38px;top:183px;font-family:'Liberation Mono',monospace;font-size:12px;"><span style="color:#0000ff"><i>b</i><i>o</i><i>o</i><i>l</i></span><span style="color:#e8e8e8"><i> </i><i>l</i><i>e</i><i>g</i><i>a</i><i>l</i><i>(</i></span><span style="color:#0000ff"><i>i</i><i>n</i><i>t</i></span><span style="color:#e8e8e8"><i> </i><i>n</i><i>u</i><i>m</i><i>,</i></span><span style="color:#0000ff"><i>i</i><i>n</i><i>t</i></span><span style="color:#e8e8e8"><i> </i><i>l</i><i>e</i><i>n</i><i>)</i></span></div>
<div class="t" style="left:0;top:198px;width:24px;text-align:right;font-family:'Liberation Mono',monospace;font-size:12px;color:#a8a0a0">14</div>
<div class="t m" style="left:38px;top:198px;font-family:'Liberation Mono',monospace;font-size:12px;"><span style="color:#e8e8e8"><i>{</i></span></div>
<div class="t" style="left:0;top:213px;width:24px;text-align:right;font-family:'Liberation Mono',monospace;font-size:12px;color:#a8a0a0">15</div>
<div class="t m" style="left:38px;top:213px;font-family:'Liberation Mono',monospace;font-size:12px;"><span style="color:#e8e8e8"><i> </i><i> </i><i> </i><i> </i></span><span style="color:#0000ff"><i>b</i><i>o</i><i>o</i><i>l</i></span><span style="color:#e8e8e8"><i> </i><i>f</i><i>l</i><i>a</i><i>g</i><i>=</i></span><span style="color:#800080"><i>1</i></span><span style="color:#e8e8e8"><i>;</i></span></div>
<div class="t" style="left:0;top:228px;width:24px;text-align:right;font-family:'Liberation Mono',monospace;font-size:12px;color:#a8a0a0">16</div>
<div class="t m" style="left:38px;top:228px;font-family:'Liberation Mono',monospace;font-size:12px;"><span style="color:#e8e8e8"><i> </i><i> </i><i> </i><i> </i></span><span style="color:#0000ff"><i>w</i><i>h</i><i>i</i><i>l</i><i>e</i></span><span style="color:#e8e8e8"><i> </i><i>(</i><i>n</i><i>u</i><i>m</i><i>)</i></span></div>
<div class="t" style="left:0;top:243px;width:24px;text-align:right;font-family:'Liberation Mono',monospace;font-size:12px;color:#a8a0a0">17</div>
<div class="t m" style="left:38px;top:243px;font-family:'Liberation Mono',monospace;font-size:12px;"><span style="color:#e8e8e8"><i> </i><i> </i><i> </i><i> </i><i>{</i></span></div>
<div class="t" style="left:0;top:258px;width:24px;text-align:right;font-family:'Liberation Mono',monospace;font-size:12px;color:#a8a0a0">18</div>
<div class="t m" style="left:38px;top:258px;font-family:'Liberation Mono',monospace;font-size:12px;"><span style="color:#e8e8e8"><i> </i><i> </i><i> </i><i> </i><i> </i><i> </i><i> </i><i> </i><i>f</i><i>l</i><i>a</i><i>g</i><i>&amp;</i><i>=</i><i>o</i><i>k</i><i>[</i><i>n</i><i>u</i><i>m</i><i>%</i></span><span style="color:#800080"><i>1</i><i>0</i></span><span style="color:#e8e8e8"><i>]</i><i>;</i></span></div>
<div class="t" style="left:0;top:273px;width:24px;text-align:right;font-family:'Liberation Mono',monospace;font-size:12px;color:#a8a0a0">19</div>
<div class="t m" style="left:38px;top:273px;font-family:'Liberation Mono',monospace;font-size:12px;"><span style="color:#e8e8e8"><i> </i><i> </i><i> </i><i> </i><i> </i><i> </i><i> </i><i> </i></span><span style="color:#0000ff"><i>i</i><i>f</i></span><span style="color:#e8e8e8"><i>(</i><i>!</i><i>f</i><i>l</i><i>a</i><i>g</i><i>)</i><i> </i></span><span style="color:#0000ff"><i>r</i><i>e</i><i>t</i><i>u</i><i>r</i><i>n</i></span><span style="color:#e8e8e8"><i> </i></span><span style="color:#800080"><i>0</i></span><span style="color:#e8e8e8"><i>;</i></span></div>
<div class="t" style="left:0;top:288px;width:24px;text-align:right;font-family:'Liberation Mono',monospace;font-size:12px;color:#a8a0a0">20</div>
<div class="t m" style="left:38px;top:288px;font-family:'Liberation Mono',monospace;font-size:12px;"><span style="color:#e8e8e8"><i> </i><i> </i><i> </i><i> </i><i> </i><i> </i><i> </i><i> </i><i>n</i><i>u</i><i>m</i><i>/</i><i>=</i></span><span style="color:#800080"><i>1</i><i>0</i></span><span style="color:#e8e8e8"><i>;</i></span></div>
<div class="t" style="left:0;top:303px;width:24px;text-align:right;font-family:'Liberation Mono',monospace;font-size:12px;color:#a8a0a0">21</div>
<div class="t m" style="left:38px;top:303px;font-family:'Liberation Mono',monospace;font-size:12px;"><span style="color:#e8e8e8"><i> </i><i> </i><i> </i><i> </i><i> </i><i> </i><i> </i><i> </i><i>-</i><i>-</i><i>l</i><i>e</i><i>n</i><i>;</i></span></div>
<div class="t" style="left:0;top:318px;width:24px;text-align:right;font-family:'Liberation Mono',monospace;font-size:12px;color:#a8a0a0">22</div>
<div class="t m" style="left:38px;top:318px;font-family:'Liberation Mono',monospace;font-size:12px;"><span style="color:#e8e8e8"><i> </i><i> </i><i> </i><i> </i><i>}</i></span></div>
<div class="t" style="left:0;top:333px;width:24px;text-align:right;font-family:'Liberation Mono',monospace;font-size:12px;color:#a8a0a0">23</div>
<div class="t m" style="left:38px;top:333px;font-family:'Liberation Mono',monospace;font-size:12px;"><span style="color:#e8e8e8"><i> </i><i> </i><i> </i><i> </i></span><span style="color:#0000ff"><i>r</i><i>e</i><i>t</i><i>u</i><i>r</i><i>n</i></span><span style="color:#e8e8e8"><i> </i><i>f</i><i>l</i><i>a</i><i>g</i><i>&amp;</i><i>&amp;</i><i>(</i><i>!</i><i>l</i><i>e</i><i>n</i><i>)</i><i>;</i></span></div>
<div class="t" style="left:0;top:348px;width:24px;text-align:right;font-family:'Liberation Mono',monospace;font-size:12px;color:#a8a0a0">24</div>
<div class="t m" style="left:38px;top:348px;font-family:'Liberation Mono',monospace;font-size:12px;"><span style="color:#e8e8e8"><i>}</i></span></div>
<div class="t" style="left:0;top:363px;width:24px;text-align:right;font-family:'Liberation Mono',monospace;font-size:12px;color:#a8a0a0">25</div>
<div class="t m" style="left:38px;top:363px;font-family:'Liberation Mono',monospace;font-size:12px;"></div>
<div class="t" style="left:0;top:378px;width:24px;text-align:right;font-family:'Liberation Mono',monospace;font-size:12px;color:#a8a0a0">26</div>
<div class="t m" style="left:38px;top:378px;font-family:'Liberation Mono',monospace;font-size:12px;"><span style="color:#00a000"><i>/</i><i>*</i><i> </i><b>这</b><b>段</b><b>过</b><b>程</b><b>显</b><b>得</b><b>相</b><b>当</b><b>恶</b><b>心</b><i>,</i><b>可</b><b>读</b><b>性</b><b>极</b><b>差</b><i>,</i><b>不</b><b>过</b><b>将</b><b>就</b><b>过</b><b>去</b><b>吧</b><i> </i><i>*</i><i>/</i></span></div>
<div class="t" style="left:0;top:395px;width:24px;text-align:right;font-family:'Liberation Mono',monospace;font-size:12px;color:#a8a0a0">27</div>
<div class="t m" style="left:38px;top:395px;font-family:'Liberation Mono',monospace;font-size:12px;"><span style="color:#0000ff"><i>v</i><i>o</i><i>i</i><i>d</i></span><span style="color:#e8e8e8"><i> </i><i>s</i><i>e</i><i>a</i><i>r</i><i>c</i><i>h</i><i>(</i></span><span style="color:#0000ff"><i>i</i><i>n</i><i>t</i></span><span style="color:#e8e8e8"><i> </i><i>k</i><i>)</i></span></div>
</div>
<svg class="a" style="left:196px;top:455px" width="6" height="10" viewBox="0 0 6 10"><path d="M0 0l5 5-5 5z" fill="#000080"/></svg>
<div class="a" style="left:421px;top:453px;width:1px;height:15px;background:#fff"></div>
<div class="a" style="left:194px;top:577px;width:640px;height:17px;background:#ececec"></div>
<div class="a" style="left:195px;top:578px;width:7px;height:15px;background:#eeeeee;border-right:1px solid #555;border-bottom:1px solid #555"></div>
<svg class="a" style="left:207px;top:582px" width="5" height="8" viewBox="0 0 5 8"><path d="M5 0v8L0 4z" fill="#333"/></svg>
<div class="a" style="left:220px;top:578px;width:15px;height:15px;border:1px solid #9a9a9a;border-radius:2px;background:linear-gradient(#f4f4f4,#e8e8e8 50%,#d4d4d4)"></div>
<div class="a" style="left:194px;top:594px;width:640px;height:2px;background:#f8f8f8"></div>
<div class="a" style="left:112px;top:596px;width:722px;height:22px;background:linear-gradient(#ffffff 0,#fbfbfb 50%,#f0f0f0 50%,#ececec)"></div>
<svg class="a" style="left:117px;top:601px" width="15" height="13" viewBox="0 0 15 13"><path d="M.5 2.5l1.5-2h4l1 1.5h5.5v9.5H.5z" fill="#f0dc80" stroke="#000" stroke-width=".9"/><path d="M1 4.5h11" stroke="#fff" stroke-width=".8"/><path d="M.5 12.5l2.5-6.5h11.5l-2 6.5z" fill="#e6c65a" stroke="#000" stroke-width=".9"/><path d="M12.5 12.5l2-6.5" stroke="#000" stroke-width="1.6"/></svg>
<div class="a" style="left:137px;top:596px;width:120px;height:22px;border-left:1px solid #9ccfee;border-right:1px solid #8fc6ea;background:linear-gradient(#e2f4fd 0,#def3fc 50%,#c4e8fa 50%,#bde4f8)"></div>
<svg class="a" style="left:167px;top:603px" width="8" height="8" viewBox="0 0 8 8"><path d="M4 0l4 4-4 4-4-4z" fill="#3aa0d0" stroke="#1a2a4a" stroke-width="1"/></svg>
<div class="t" style="left:178px;top:601px;font-size:12.6px;color:#000">1.3.4.cpp</div>
<div class="a" style="left:112px;top:618px;width:722px;height:1px;background:#b8b8b8"></div>
<div class="a" style="left:112px;top:619px;width:722px;height:1px;background:#fff"></div>
<div class="a" style="left:112px;top:620px;width:722px;height:1px;background:#a0a0a0"></div>
<div class="a" style="left:112px;top:621px;width:722px;height:18px;background:#efeceb"></div>
<div class="a" style="left:112px;top:639px;width:722px;height:1px;background:#fff"></div>
<div class="t" style="left:114px;top:625px;font-size:12.7px;color:#000">For Help, press F1</div>
<div class="a" style="left:677px;top:622px;width:1px;height:18px;background:#c8c4c2"></div>
<div class="a" style="left:678px;top:622px;width:1px;height:18px;background:#fff"></div>
<div class="a" style="left:734px;top:622px;width:1px;height:18px;background:#c8c4c2"></div>
<div class="a" style="left:735px;top:622px;width:1px;height:18px;background:#fff"></div>
<div class="a" style="left:784px;top:622px;width:1px;height:18px;background:#c8c4c2"></div>
<div class="a" style="left:785px;top:622px;width:1px;height:18px;background:#fff"></div>
<div class="a" style="left:816px;top:622px;width:1px;height:18px;background:#c8c4c2"></div>
<div class="a" style="left:817px;top:622px;width:1px;height:18px;background:#fff"></div>
<div class="t" style="left:618px;top:625px;font-size:12.7px;color:#000">ln 19</div>
<div class="t" style="left:682px;top:625px;font-size:12.7px;color:#000">col 28</div>
<div class="t" style="left:739px;top:625px;font-size:12.7px;color:#000">56</div>
<div class="t" style="left:789px;top:625px;font-size:12.7px;color:#000">00</div>
<div class="t" style="left:821px;top:625px;font-size:12.7px;color:#000">PC</div>
<script>(function(){var t=document.createElement('span');t.style.cssText='position:absolute;left:-999px;top:0;font:13px "Liberation Sans";white-space:pre';t.textContent='这里判断';document.body.appendChild(t);var w1=t.getBoundingClientRect().width;t.textContent='';var w2=t.getBoundingClientRect().width;document.body.removeChild(t);if(Math.abs(w1-w2)<0.5){var e=document.querySelectorAll('.cj,.m b');for(var i=0;i<e.length;i++){e[i].style.setProperty('--c',getComputedStyle(e[i]).color);}document.body.className+=' nocjk';}})();</script>
</body></html>
